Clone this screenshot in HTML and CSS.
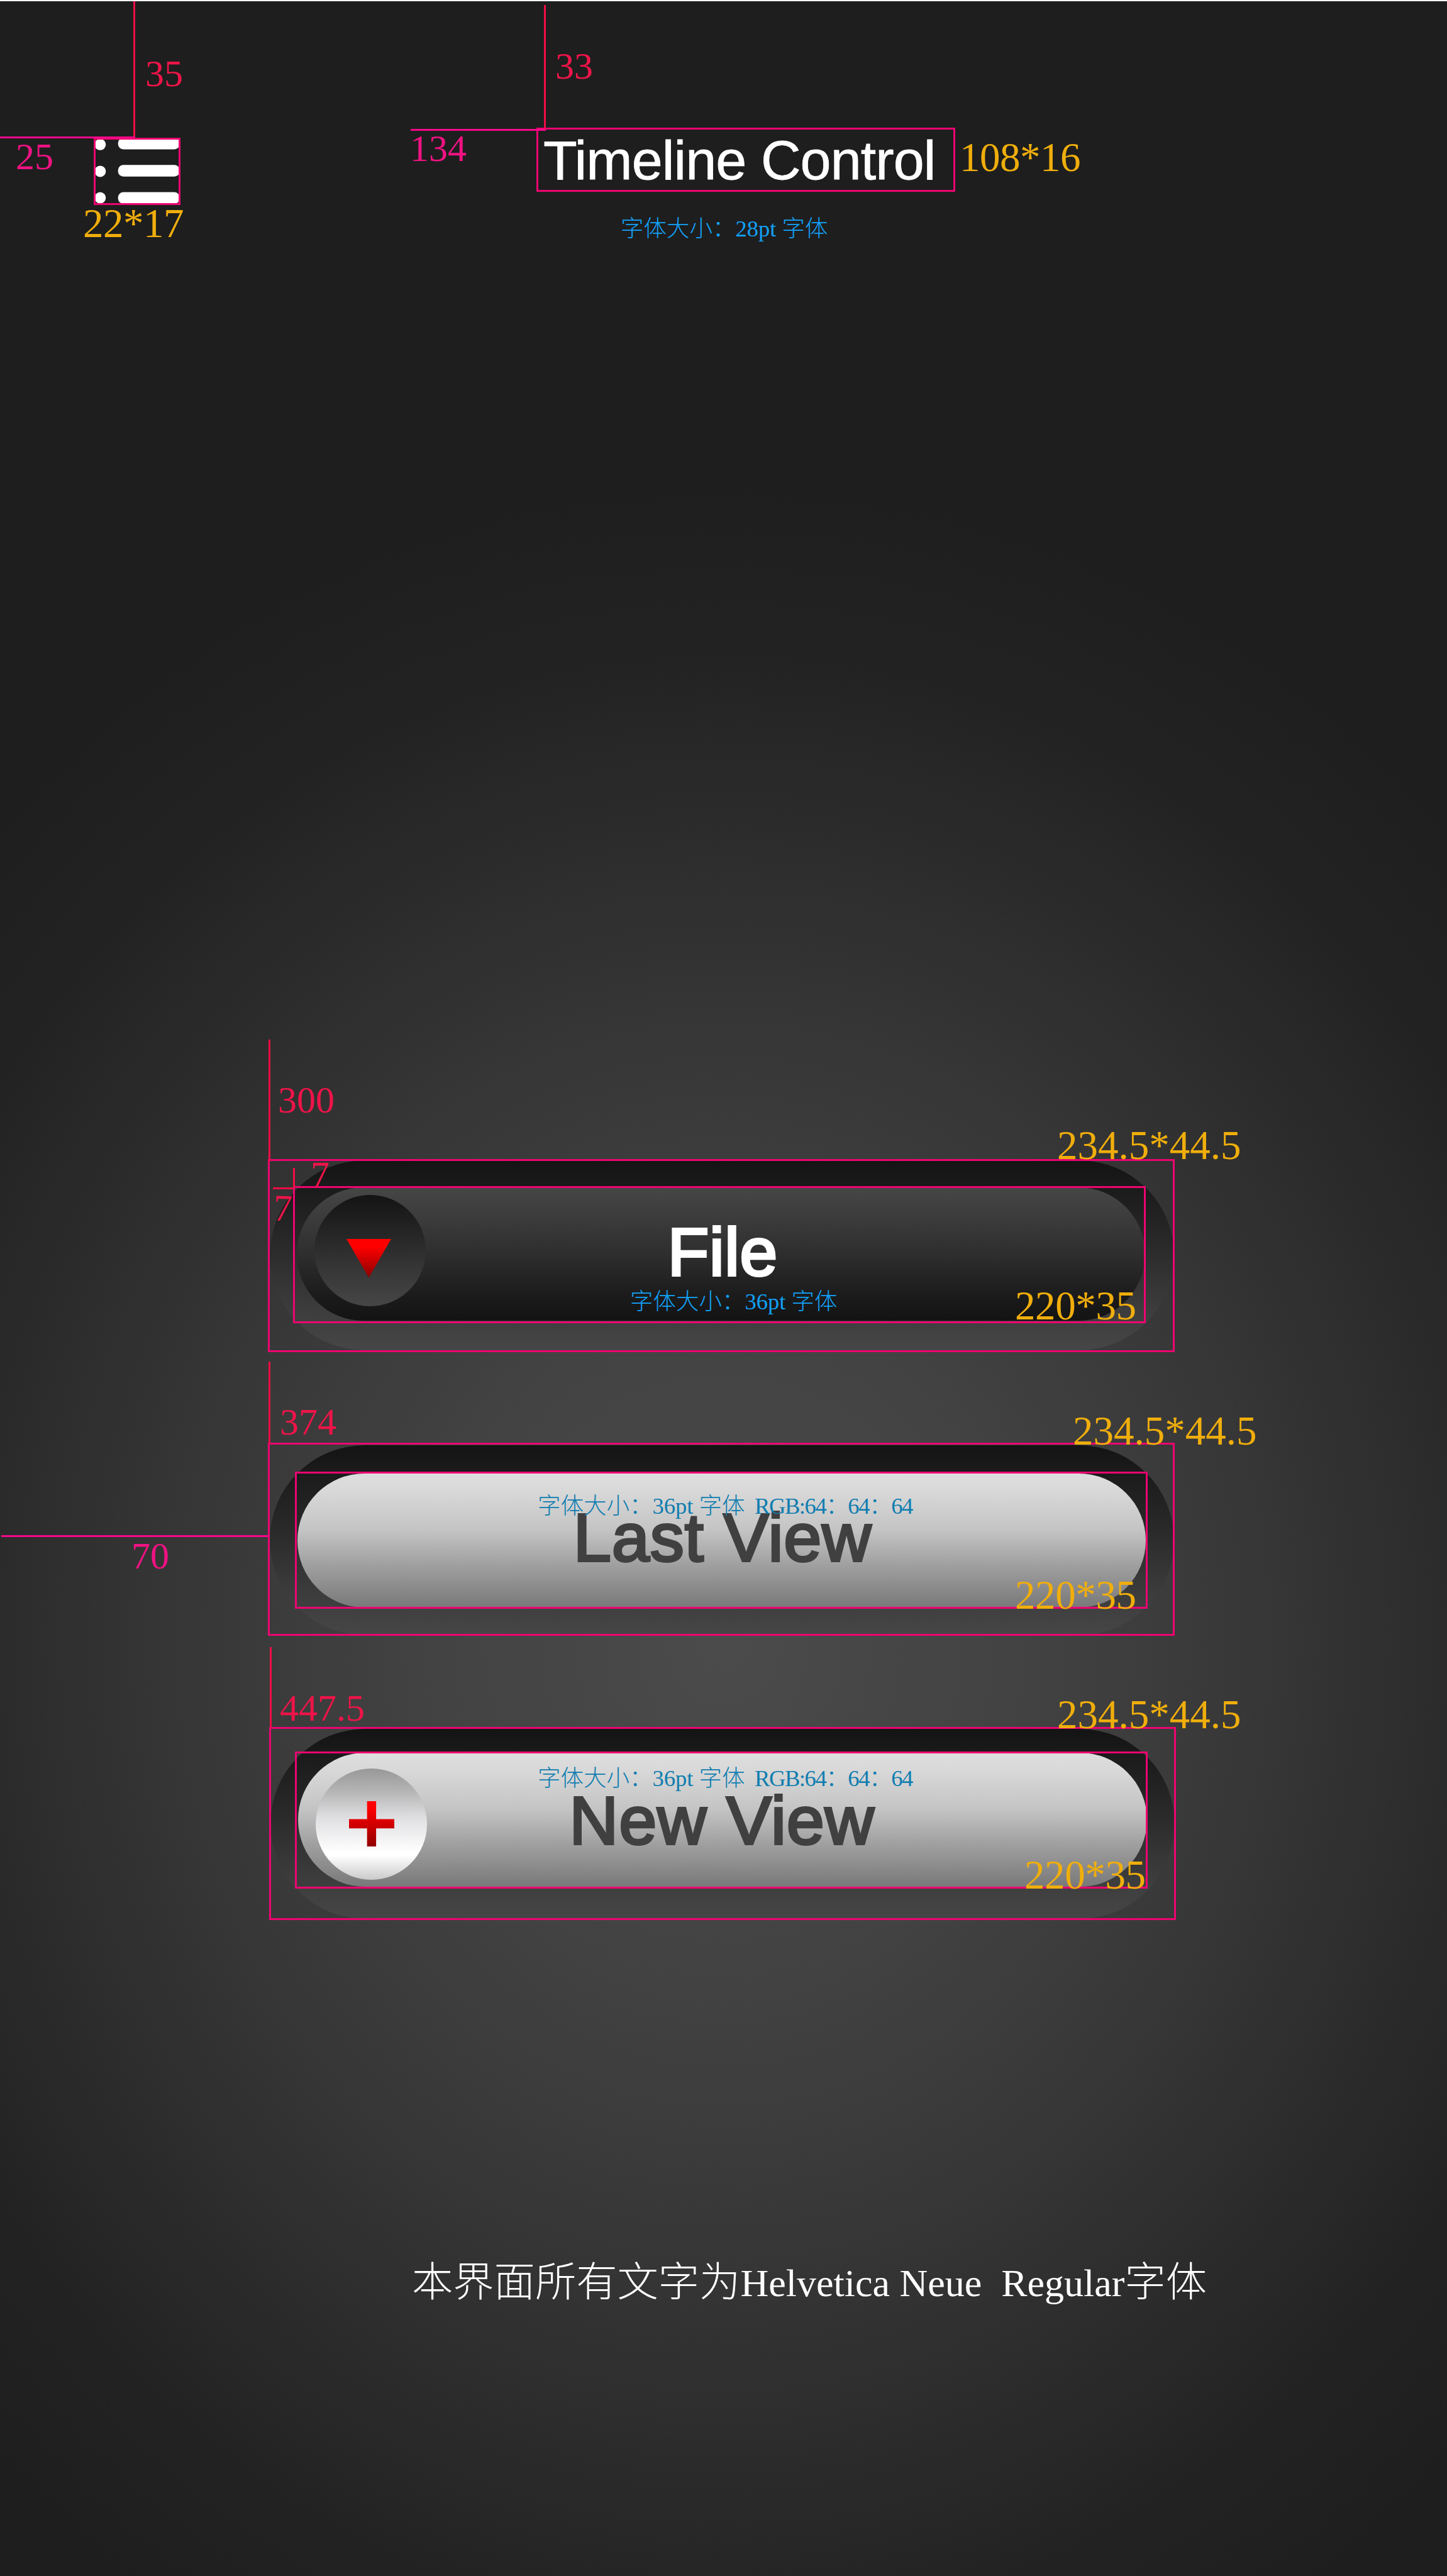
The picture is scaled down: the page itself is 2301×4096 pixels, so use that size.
FILE: index.html
```html
<!DOCTYPE html>
<html lang="zh-CN">
<head>
<meta charset="utf-8">
<title>Timeline Control</title>
<link rel="stylesheet" href="styles.css">
</head>
<body>
<div class="screen">
  <header class="topbar">
    <svg class="menu-icon" viewBox="0 0 138 107" aria-hidden="true">
      <g fill="#fff">
        <circle cx="10.3" cy="10.8" r="9"/><circle cx="10.3" cy="53.4" r="9"/><circle cx="10.3" cy="95.6" r="9"/>
        <rect x="38.7" y="0" width="98" height="18.6" rx="8.5"/>
        <rect x="38.7" y="43.3" width="98" height="18.4" rx="8.5"/>
        <rect x="38.7" y="86.6" width="98" height="18.4" rx="8.5"/>
      </g>
    </svg>
    <h1 class="title">Timeline Control</h1>
  </header>

  <main class="actions">
    <div class="well">
      <div class="pill pill-dark">
        <span class="knob knob-dark">
          <svg class="arrow" viewBox="0 0 71 62"><defs><linearGradient id="ga" x1="0" y1="0" x2="0" y2="1"><stop offset=".2" stop-color="#f00"/><stop offset="1" stop-color="#8a0000"/></linearGradient></defs><path d="M0 0h71L35.5 61.5z" fill="url(#ga)"/></svg>
        </span>
        <span class="label">File</span>
      </div>
    </div>
    <div class="well well-last">
      <div class="pill pill-light"><span class="label">Last View</span></div>
    </div>
    <div class="well well-new">
      <div class="pill pill-light">
        <span class="knob knob-light">
          <svg class="plus" viewBox="0 0 72 72"><defs><linearGradient id="gp" x1="0" y1="0" x2="0" y2="1"><stop offset=".15" stop-color="#f00"/><stop offset="1" stop-color="#930000"/></linearGradient></defs><path d="M28.7 0h14.4v28.6H72v14.7H43.1V72H28.7V43.3H0V28.6h28.7z" fill="url(#gp)"/></svg>
        </span>
        <span class="label">New View</span>
      </div>
    </div>
  </main>

  <footer class="note">本界面所有文字为<span class="note-latin">Helvetica Neue&nbsp; Regular</span>字体</footer>

  <div class="spec">
    <i class="frame f-menu"></i><i class="frame f-title"></i>
    <i class="frame f-file-out"></i><i class="frame f-file-in"></i>
    <i class="frame f-last-out"></i><i class="frame f-last-in"></i>
    <i class="frame f-new-out"></i><i class="frame f-new-in"></i>

    <i class="rule v r-35"></i><i class="rule h r-25"></i>
    <i class="rule v r-33"></i><i class="rule h r-134"></i>
    <i class="rule v r-300"></i><i class="rule v r-7v"></i><i class="rule h red r-7h"></i>
    <i class="rule v r-374"></i><i class="rule h r-70"></i><i class="rule v r-447"></i>

    <span class="dist d-35">35</span><span class="dist pink d-25">25</span>
    <span class="dist d-33">33</span><span class="dist pink d-134">134</span>
    <span class="dist d-300">300</span><span class="dist d-7a">7</span><span class="dist d-7b">7</span>
    <span class="dist d-374">374</span><span class="dist pink d-70">70</span><span class="dist d-447">447.5</span>

    <span class="size s-menu">22*17</span><span class="size s-title">108*16</span>
    <span class="size s-file-out">234.5*44.5</span><span class="size s-file-in">220*35</span>
    <span class="size s-last-out">234.5*44.5</span><span class="size s-last-in">220*35</span>
    <span class="size s-new-out">234.5*44.5</span><span class="size s-new-in">220*35</span>

    <span class="type t-title">字体大小：28pt 字体</span>
    <span class="type t-file">字体大小：36pt 字体</span>
    <span class="type deep t-last">字体大小：36pt 字体<span class="rgb">&nbsp; RGB:64：64：64</span></span>
    <span class="type deep t-new">字体大小：36pt 字体<span class="rgb">&nbsp; RGB:64：64：64</span></span>
  </div>
</div>
</body>
</html>
```
FILE: styles.css
```css
* { box-sizing: border-box; }
body { margin: 0; background: #1e1e1e; }

.screen {
  position: relative;
  width: 2301px;
  height: 4096px;
  overflow: hidden;
  border-top: 2px solid #f6f8fa;
  background: radial-gradient(ellipse 1640px 1850px at 1150px 2608px, #4b4b4b 0%, #424242 30%, #383838 50%, #2b2b2b 71%, #222 86%, #1e1e1e 100%);
  font-family: "Liberation Serif", "Noto Sans CJK SC", serif;
}

/* top bar */
.topbar {
  display: flex;
  align-items: flex-start;
  height: 1843px;
  padding: 208px 0 0 149px;
}
.menu-icon { width: 138px; height: 107px; margin-top: 9px; }
.title {
  margin: 1px 0 0 577px;
  font: 400 88px/88px "Liberation Sans", Arial, sans-serif;
  letter-spacing: -0.87px;
  color: #fff;
  -webkit-text-stroke: 0.8px currentColor;
  white-space: nowrap;
}

/* buttons */
.actions { padding-left: 429px; }
.well {
  display: flex;
  width: 1438px;
  height: 302px;
  padding: 43px 46px 47px 43px;
  border-radius: 151px;
  background: linear-gradient(#141414, #1b1b1b 15%, #2a2a2a 45%, #3d3d3d 80%, #464646);
}
.well-last { margin-top: 151px; padding: 45px 45px 44px 44px; }
.well-new { margin-top: 149px; margin-left: 1px; padding: 38px 44px 51px 44px; }
.pill {
  display: grid;
  flex: 1;
  align-items: center;
  border-radius: 107px;
}
.pill > * { grid-area: 1 / 1; }
.pill-dark { background: linear-gradient(#464646, #3c3c3c 22%, #2d2d2d 52%, #1c1c1c 80%, #131313); }
.pill-light { background: linear-gradient(#dedede, #d9d9d9 12%, #c4c4c4 42%, #a0a0a0 68%, #797979); }
.label {
  justify-self: center;
  padding: 0 0 9px 3px;
  font: 400 108px/108px "Liberation Sans", Arial, sans-serif;
  letter-spacing: 0.9px;
  color: #404040;
  -webkit-text-stroke: 3.8px currentColor;
  white-space: nowrap;
}
.pill-dark .label { padding: 0 0 6px 5px; letter-spacing: 0.3px; color: #fff; }
.well-new .label { padding: 2px 2px 0 0; }
.knob {
  display: grid;
  place-items: center;
  width: 177px;
  height: 177px;
  margin-left: 28px;
  border-radius: 50%;
}
.knob-dark { margin-bottom: 11px; background: linear-gradient(#141414, #232323 30%, #383838 70%, #464646); }
.knob-light { margin-top: 13px; background: linear-gradient(#989898, #b4b4b4 20%, #dfdfe2 44%, #fff 75%, #fff 78%, #cacaca); }
.arrow { width: 71px; height: 62px; margin: 24px 4px 0 0; }
.plus { width: 72px; height: 72px; }

/* footer note */
.note {
  margin: 546px 0 0 655px;
  font-size: 65.3px;
  font-weight: 300;
  line-height: 65.5px;
  color: #fff;
  white-space: nowrap;
}
.note-latin { font-size: 62px; }

/* measuring overlay */
.spec > * { position: absolute; white-space: nowrap; }
.spec { position: absolute; inset: -2px 0 0 0; }
.frame { border: 3px solid #ee0471; }
.f-menu { left: 149px; top: 219px; width: 138px; height: 107px; }
.f-title { left: 853px; top: 203px; width: 666px; height: 102px; }
.f-file-out { left: 426px; top: 1843px; width: 1442px; height: 307px; }
.f-file-in { left: 466px; top: 1886px; width: 1356px; height: 218px; }
.f-last-out { left: 426px; top: 2294px; width: 1442px; height: 307px; }
.f-last-in { left: 469px; top: 2340px; width: 1356px; height: 218px; }
.f-new-out { left: 428px; top: 2746px; width: 1442px; height: 307px; }
.f-new-in { left: 469px; top: 2785px; width: 1356px; height: 218px; }

.rule.v { width: 3px; background: #f20d45; }
.rule.h { height: 3px; background: #f9078b; }
.rule.red { background: #f20d45; }
.r-35 { left: 212px; top: 1px; height: 216px; }
.r-25 { left: 0; top: 217px; width: 215px; }
.r-33 { left: 865px; top: 8px; height: 197px; }
.r-134 { left: 653px; top: 205px; width: 215px; }
.r-300 { left: 427px; top: 1653px; height: 194px; }
.r-7v { left: 466px; top: 1857px; height: 31px; }
.r-7h { left: 434px; top: 1888px; width: 33px; }
.r-374 { left: 427px; top: 2165px; height: 130px; }
.r-70 { left: 2px; top: 2441px; width: 425px; }
.r-447 { left: 429px; top: 2619px; height: 128px; }

.dist { font-size: 60px; line-height: 60px; color: #ee1449; }
.dist.pink { color: #f01282; }
.d-35 { left: 231px; top: 87px; }
.d-25 { left: 25px; top: 219px; }
.d-33 { left: 883px; top: 75px; }
.d-134 { left: 652px; top: 206px; }
.d-300 { left: 442px; top: 1719px; }
.d-7a { left: 494px; top: 1838px; }
.d-7b { left: 435px; top: 1891px; transform: rotate(2deg); }
.d-374 { left: 445px; top: 2231px; }
.d-70 { left: 209px; top: 2444px; }
.d-447 { left: 445px; top: 2686px; }

.size { font-size: 65px; line-height: 65px; color: #f0ae0c; }
.s-menu { left: 132px; top: 323px; letter-spacing: -0.5px; }
.s-title { left: 1526px; top: 218px; letter-spacing: -0.5px; }
.s-file-out { left: 1681px; top: 1789px; }
.s-file-in { left: 1614px; top: 2044px; letter-spacing: -0.4px; }
.s-last-out { left: 1706px; top: 2243px; }
.s-last-in { left: 1614px; top: 2504px; letter-spacing: -0.4px; }
.s-new-out { left: 1681px; top: 2694px; }
.s-new-in { left: 1629px; top: 2949px; letter-spacing: -0.4px; }

.type { font-size: 36.5px; font-weight: 300; line-height: 37px; color: #12a1f8; }
.type.deep { color: #0f7db0; }
.rgb { letter-spacing: -1.4px; }
.t-title { left: 987px; top: 345px; }
.t-file { left: 1002px; top: 2051px; }
.t-last { left: 855px; top: 2376px; }
.t-new { left: 855px; top: 2809px; }
```
